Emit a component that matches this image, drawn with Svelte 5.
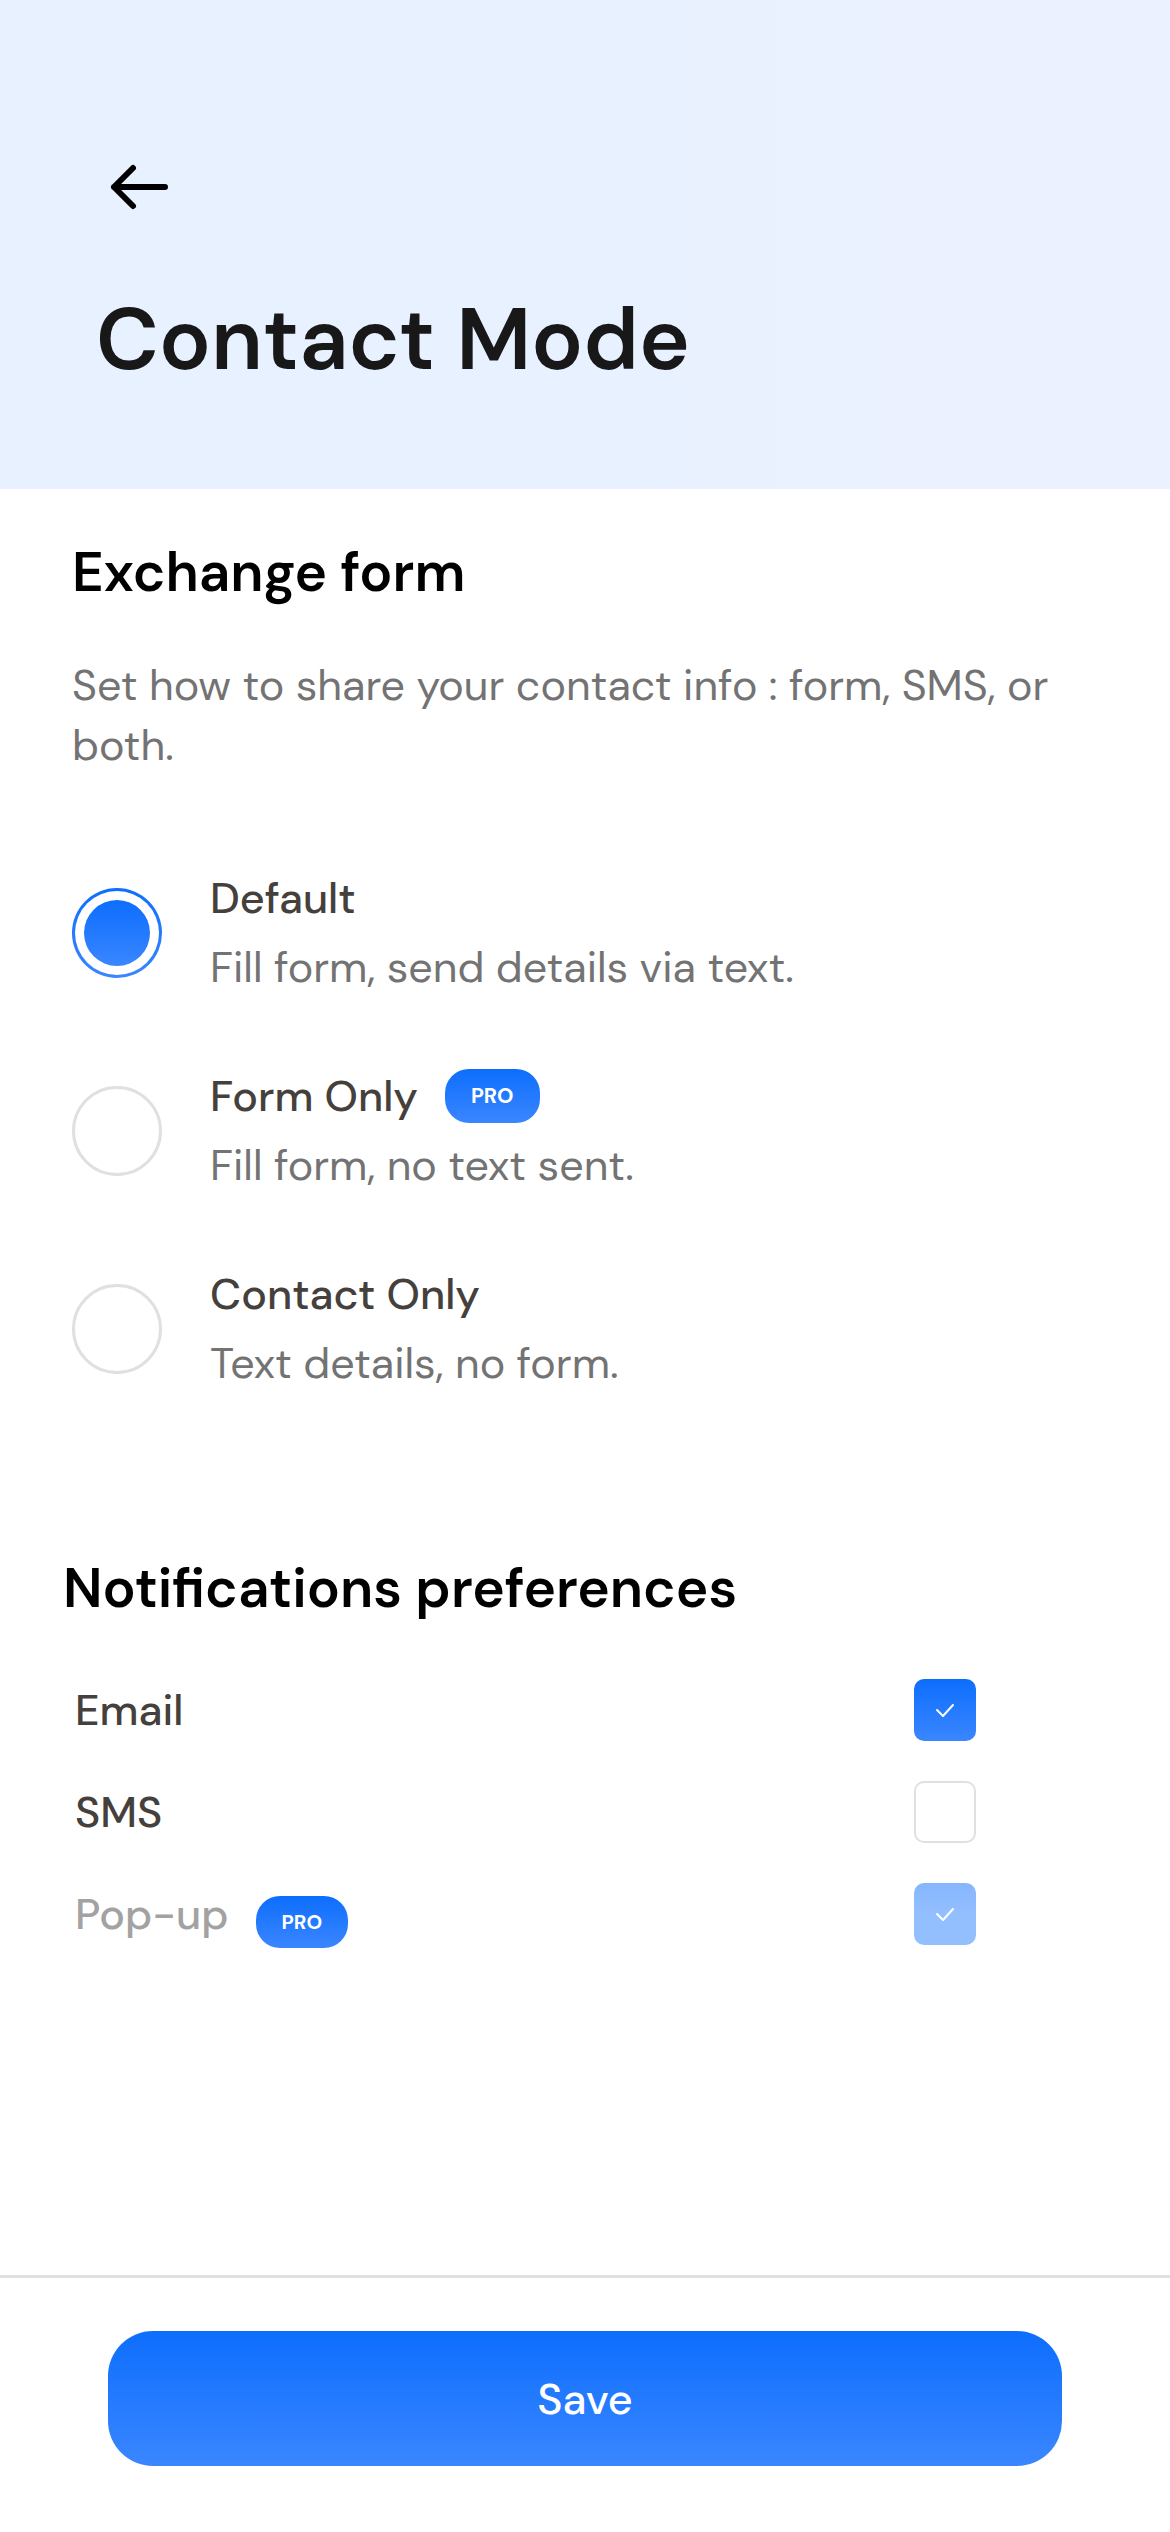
<script>
  let mode = $state('default');

  const modes = [
    { id: 'default', title: 'Default', detail: 'Fill form, send details via text.', pro: false },
    { id: 'form', title: 'Form Only', detail: 'Fill form, no text sent.', pro: true },
    { id: 'contact', title: 'Contact Only', detail: 'Text details, no form.', pro: false }
  ];

  let channels = $state([
    { id: 'email', title: 'Email', on: true, pro: false },
    { id: 'sms', title: 'SMS', on: false, pro: false },
    { id: 'popup', title: 'Pop-up', on: true, pro: true }
  ]);
</script>

<div class="page">
  <header>
    <button class="back" type="button" aria-label="Back">
      <svg width="60" height="48" viewBox="0 0 60 48" aria-hidden="true">
        <path d="M25 5 6 24l19 19M6 24h51" />
      </svg>
    </button>
    <h1>Contact Mode</h1>
  </header>

  <main>
    <section class="exchange">
      <h2>Exchange form</h2>
      <p class="intro">Set how to share your contact info : form, SMS, or both.</p>
      <div class="modes" role="radiogroup" aria-label="Exchange form">
        {#each modes as item (item.id)}
          <label class="mode">
            <input type="radio" name="mode" value={item.id} bind:group={mode} />
            <span class="text">
              <span class="name">
                {item.title}
                {#if item.pro}<span class="badge">PRO</span>{/if}
              </span>
              <span class="detail">{item.detail}</span>
            </span>
          </label>
        {/each}
      </div>
    </section>

    <section class="notifications">
      <h2>Notifications preferences</h2>
      <div class="channels">
        {#each channels as item (item.id)}
          <label class="channel" class:locked={item.pro}>
            <span class="caption">
              <span class="word">{item.title}</span>
              {#if item.pro}<span class="badge compact">PRO</span>{/if}
            </span>
            <span class="tick">
              <input type="checkbox" bind:checked={item.on} disabled={item.pro} />
              {#if item.on}
                <svg width="62" height="62" viewBox="0 0 62 62" aria-hidden="true">
                  <path d="M23 31l6 6 10-11" />
                </svg>
              {/if}
            </span>
          </label>
        {/each}
      </div>
    </section>
  </main>

  <footer>
    <button class="save" type="button">Save</button>
  </footer>
</div>

<style>
  .page {
    --blue: linear-gradient(180deg, #0d6efd 0%, #3a86ff 100%);
    display: flex;
    flex-direction: column;
    min-height: 100vh;
    background: #fff;
    color: #000;
    font-family: 'DM Sans', Inter, sans-serif;
    font-size: 43px;
    line-height: 60px;
  }

  h1,
  h2,
  p {
    margin: 0;
  }

  button,
  input {
    box-sizing: border-box;
    margin: 0;
    font: inherit;
  }

  header {
    padding: 145px 96px 101px;
    background: linear-gradient(90deg, #e7f1ff 45%, #ebf1ff 80%);
  }

  .back {
    display: grid;
    place-items: center;
    width: 84px;
    height: 84px;
    padding: 0;
    border: 0;
    background: none;
    cursor: pointer;
  }

  .back path {
    fill: none;
    stroke: #000;
    stroke-width: 6;
    stroke-linecap: round;
    stroke-linejoin: round;
  }

  h1 {
    margin-top: 63px;
    color: #181818;
    font-size: 86px;
    line-height: 96px;
    font-weight: 600;
  }

  main {
    flex: 1;
  }

  h2 {
    font-size: 55px;
    line-height: 66px;
    font-weight: 600;
  }

  .exchange {
    padding: 50px 72px 0;
  }

  .intro {
    margin-top: 50px;
    color: #737373;
  }

  .modes {
    display: flex;
    flex-direction: column;
    gap: 69px;
    margin-top: 93px;
  }

  .mode {
    display: flex;
    align-items: center;
    gap: 48px;
    cursor: pointer;
  }

  .mode input {
    appearance: none;
    flex: none;
    width: 90px;
    height: 90px;
    padding: 9px;
    border: 3px solid #e0e0e0;
    border-radius: 50%;
  }

  .mode input:checked {
    border-color: transparent;
    background:
      var(--blue) content-box,
      linear-gradient(#fff, #fff) padding-box,
      var(--blue) border-box;
  }

  .text {
    display: flex;
    flex-direction: column;
    gap: 9px;
  }

  .name {
    display: flex;
    align-items: center;
    gap: 27px;
    color: #45403c;
    font-weight: 500;
  }

  .detail {
    color: #737373;
  }

  .badge {
    padding: 0 26px;
    border-radius: 24px;
    background: var(--blue);
    color: #fff;
    font-size: 21px;
    line-height: 54px;
    font-weight: 700;
  }

  .badge.compact {
    font-size: 20px;
    line-height: 52px;
  }

  .notifications {
    padding: 162px 194px 0 63px;
  }

  .channels {
    display: flex;
    flex-direction: column;
    gap: 40px;
    margin-top: 58px;
    padding-left: 12px;
  }

  .channel {
    display: flex;
    align-items: center;
    justify-content: space-between;
    height: 62px;
    color: #45403c;
    font-weight: 500;
    cursor: pointer;
  }

  .caption {
    display: flex;
    align-items: baseline;
    gap: 27px;
    height: 60px;
  }

  .locked .word {
    color: #a2a2a2;
  }

  .tick {
    display: grid;
  }

  .tick > * {
    grid-area: 1 / 1;
  }

  .tick input {
    appearance: none;
    width: 62px;
    height: 62px;
    border: 2px solid #e0e0e0;
    border-radius: 10px;
  }

  .tick input:checked {
    border: 0;
    background: var(--blue);
  }

  .tick input:disabled {
    background: linear-gradient(180deg, #86b6fe, #94bfff 50%);
  }

  .tick svg {
    pointer-events: none;
  }

  .tick path {
    fill: none;
    stroke: #fff;
    stroke-width: 2;
    stroke-linecap: round;
    stroke-linejoin: round;
  }

  footer {
    padding: 53px 108px 66px;
    border-top: 3px solid #e0e0e0;
  }

  .save {
    display: block;
    width: 100%;
    height: 135px;
    padding: 0;
    border: 0;
    border-radius: 45px;
    background: var(--blue);
    color: #fff;
    font-weight: 500;
    cursor: pointer;
  }
</style>
